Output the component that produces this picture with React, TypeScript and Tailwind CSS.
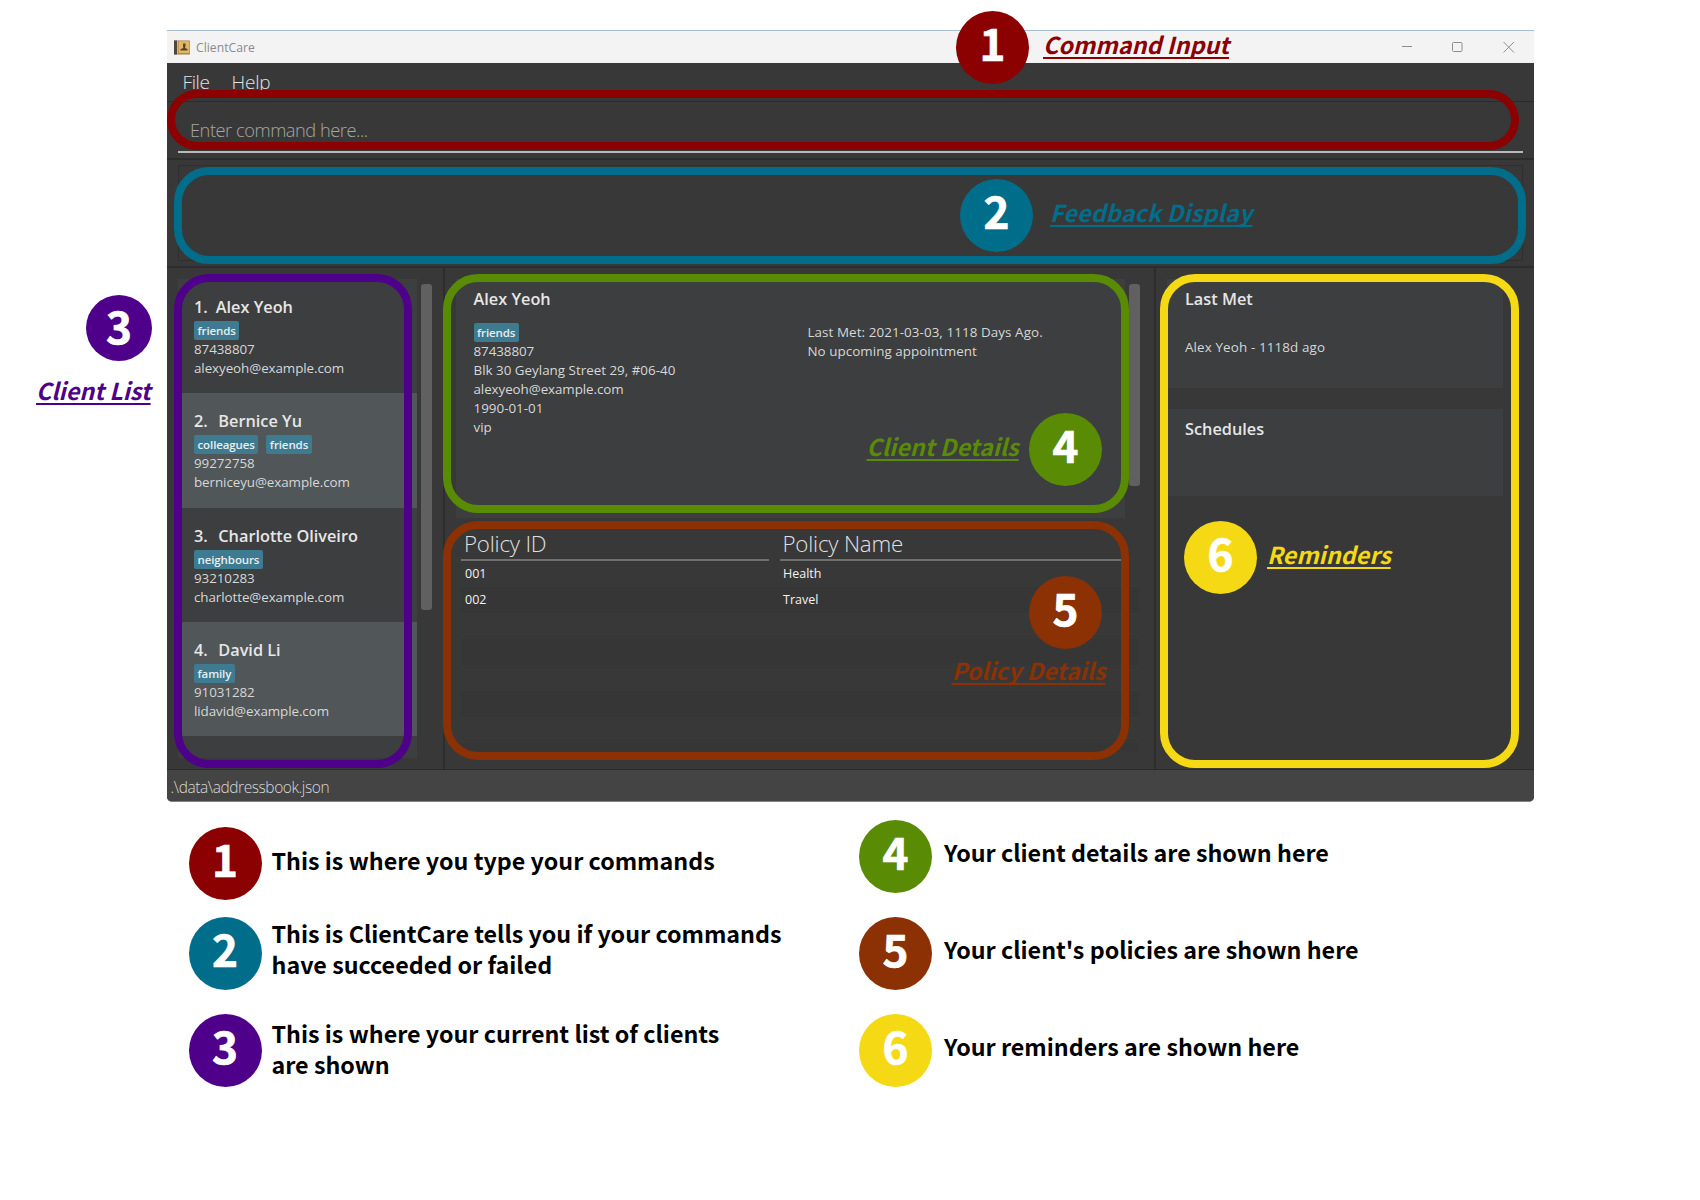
import React from "react";

function Tag({ children }: { children: string }) {
  return (
    <span className="flex h-[19px] items-center rounded-[2px] bg-[#3e7b91] px-[3.5px] text-[11.5px] leading-[19px] font-semibold tracking-[-0.1px] whitespace-pre text-[#e8eef0]">
      {children}
    </span>
  );
}

const clients = [
  { n: 1, name: "Alex Yeoh", tags: ["friends"], phone: "87438807", email: "alexyeoh@example.com" },
  { n: 2, name: "Bernice Yu", tags: ["colleagues", "friends"], phone: "99272758", email: "berniceyu@example.com" },
  { n: 3, name: "Charlotte Oliveiro", tags: ["neighbours"], phone: "93210283", email: "charlotte@example.com" },
  { n: 4, name: "David Li", tags: ["family"], phone: "91031282", email: "lidavid@example.com" },
];

const policies = [["001", "Health"], ["002", "Travel"], [], [], [], [], [], []];

const body = "whitespace-pre text-[13.4px] leading-[19px] text-[#d6d7d7] ";
const tight = "tracking-[-0.08px] ";
const title = "whitespace-pre text-[16.3px] leading-6 font-semibold text-[#e6e6e6] ";
const column = "whitespace-pre text-[22.3px] leading-[29px] font-light tracking-[-0.2px] text-[#e0e0e0]";

function Badge({ n, c }: { n: number; c: string }) {
  return (
    <div className={"flex items-center justify-center rounded-full font-['Noto_Sans_CJK_SC',sans-serif] font-bold text-white " + c}>
      <span className="pb-[11px] text-[44px] leading-[60px] [-webkit-text-stroke:0.7px_white]">{n}</span>
    </div>
  );
}

function Label({ c, children }: { c: string; children: string }) {
  return (
    <div className={"absolute h-[36px] font-['Noto_Sans_CJK_SC',sans-serif] text-[23.3px] leading-[36px] font-bold whitespace-pre italic underline decoration-[1.5px] underline-offset-[3px] [text-decoration-skip-ink:none] " + c}>
      {children}
    </div>
  );
}

function Note({ n, bg, c, t, lines }: { n: number; bg: string; c: string; t: string; lines: string[] }) {
  return (
    <div className={"flex " + c}>
      <Badge n={n} c={"size-[73px] shrink-0 " + bg} />
      <div className={"flex flex-col justify-center font-['Noto_Sans_CJK_SC',sans-serif] text-[23.27px] leading-[31px] font-bold whitespace-pre text-black " + t}>
        {lines.map((l) => <span key={l}>{l}</span>)}
      </div>
    </div>
  );
}

export default function App() {
  return (
    <div className="relative h-[1200px] w-[1700px] overflow-hidden bg-white font-['Open_Sans',sans-serif]">
      <div className="mt-[30px] ml-[166.5px] flex h-[772px] w-[1367px] flex-col overflow-hidden rounded-b-[5px] border-t border-b border-t-[#a9bfcf] border-b-[#8c8273] bg-[#383838]">
        <div className="flex h-8 shrink-0 items-center bg-[#f3f3f3] pl-[7.5px]">
          <svg width="17" height="15" viewBox="0 0 17 15">
            <rect x="0" y="0.500" width="16" height="14" rx="0.800" fill="#a47a3c" />
            <rect x="0" y="0.500" width="3" height="14" fill="#54463a" />
            <rect x="3" y="0.500" width="1" height="14" fill="#cdb387" />
            <rect x="4.500" y="1.200" width="11" height="12" fill="#e3b765" />
            <path d="M9 3.500h2.500v2.500l-.5 2 2.500 1v1.500H6.500V9L9 8.200l.3-.7L9 6z" fill="#54422c" />
          </svg>
          <span className="ml-[5px] pt-[2px] text-[12.2px] leading-5 text-[#8b8b8b]">ClientCare</span>
          <svg className="mr-[19px] ml-auto" width="116" height="14" viewBox="0 0 116 14" fill="none" stroke="#8e8e8e">
            <path d="M3 6.500h10" />
            <rect x="53.500" y="2.500" width="9.500" height="9" rx="1" />
            <path d="M104.500 2l10.500 10.500M115 2l-10.500 10.500" />
          </svg>
        </div>
        <div className="flex h-[38px] shrink-0 gap-[22px] pl-4 text-[19px] leading-[39px] font-light text-[#e2e2e2]">
          <span className="tracking-[-0.4px]">File</span>
          <span className="tracking-[-0.2px]">Help</span>
        </div>
        <div className="h-[57px] shrink-0 border-t border-[#2b2b2b] px-[11px] pt-[17px]">
          <div className="h-[34px] border-b-2 border-[#b9b9b9] pl-[12.5px] text-[18.3px] leading-[22px] font-light tracking-[-0.48px] whitespace-pre text-[#a6a6a6]">
            Enter command here...
          </div>
        </div>
        <div className="h-[108px] shrink-0 border-t-2 border-[#2d2d2d] px-[11px] pt-[5px]">
          <div className="h-[96px] border border-[#2f2f2f]" />
        </div>
        <div className="flex h-[503px] shrink-0 border-t-2 border-[#2d2d2d]">
          <div className="flex w-[276.5px] gap-1 pt-[11px] pl-[11px]">
            <div className="h-[479px] w-[239px] overflow-hidden">
              {clients.map((p, i) => (
                <div key={p.n} className={"flex h-[114.3px] flex-col pt-4 pl-[16.5px] " + (i % 2 ? "bg-[#515658]" : "bg-[#3c3e3f]")}>
                  <div className={"flex " + (i ? "gap-[10.5px]" : "gap-2")}>
                    <span className={title}>{p.n + "."}</span>
                    <span className={title}>{p.name}</span>
                  </div>
                  <div className="mt-[2px] flex gap-2">{p.tags.map((t) => <Tag key={t}>{t}</Tag>)}</div>
                  <span className={body + tight}>{p.phone}</span>
                  <span className={body + tight}>{p.email}</span>
                </div>
              ))}
              <div className="h-[22px] bg-[#3c3e3f]" />
            </div>
            <div className="mt-[5px] h-[326px] w-[11px] rounded-[3px] bg-[#606060]" />
          </div>
          <div className="flex w-[713px] flex-col border-x-2 border-[#2d2d2d] pt-[11px] pl-[11px]">
            <div className="flex h-[239px] gap-1">
              <div className="flex w-[669px] flex-col bg-[#3c3e3f] pl-[17.5px]">
                <span className={title + "mt-[8px]"}>Alex Yeoh</span>
                <div className="mt-3 flex">
                  <div className="flex w-[334px] flex-col items-start">
                    <Tag>friends</Tag>
                    <span className={body + tight}>87438807</span>
                    <span className={body}>Blk 30 Geylang Street 29, #06-40</span>
                    <span className={body + tight}>alexyeoh@example.com</span>
                    <span className={body}>1990-01-01</span>
                    <span className={body}>vip</span>
                  </div>
                  <div className="flex flex-col items-start">
                    <span className={body + "tracking-[0.08px]"}>Last Met: 2021-03-03, 1118 Days Ago.</span>
                    <span className={body + "tracking-[0.04px]"}>No upcoming appointment</span>
                  </div>
                </div>
              </div>
              <div className="mt-[5px] h-[202px] w-[11px] rounded-[3px] bg-[#606060]" />
            </div>
            <div className="mt-[11px] ml-[5px] w-[678px]">
              <div className="flex h-[32px] gap-[11px]">
                <div className={"w-[308px] border-b-2 border-[#707070] pl-[3px] " + column}>Policy ID</div>
                <div className={"w-[341px] border-b-2 border-[#707070] pl-[2.5px] " + column}>Policy Name</div>
              </div>
              {policies.map((r, i) => (
                <div key={i} className={"flex pl-[4px] text-[12.5px] leading-[25px] text-[#f2f2f2] " + (i === 7 ? "h-[9px] " : "h-[26px] ") + (i % 2 ? "bg-[#363636]" : "")}>
                  <span className="w-[318px]">{r[0]}</span>
                  <span>{r[1]}</span>
                </div>
              ))}
            </div>
          </div>
          <div className="flex flex-col pt-[11px] pl-[11px]">
            <div className="flex h-[109px] w-[336px] flex-col bg-[#3c3e3f] pl-[18px]">
              <span className={title + "mt-[8px]"}>Last Met</span>
              <span className={body + "mt-[27px] tracking-[0.13px]"}>Alex Yeoh - 1118d ago</span>
            </div>
            <div className="mt-[21px] flex h-[87px] w-[336px] flex-col bg-[#3c3e3f] pl-[18px]">
              <span className={title + "mt-[8px]"}>Schedules</span>
            </div>
          </div>
        </div>
        <div className="flex h-[32px] shrink-0 border-t border-[#2b2b2b] bg-[#444444] pl-1 text-[15.5px] leading-[34px] font-light tracking-[-0.42px] whitespace-pre text-[#d8d8d8]">
          {".\\data\\addressbook.json"}
        </div>
      </div>

      <div className="mt-[17.500px] ml-[188.500px] flex">
        <div className="w-[670.500px]">
          <Note n={1} bg="bg-[#8b0000]" c="mt-[7px]" t="pb-[5px] pl-[10px]" lines={["This is where you type your commands"]} />
          <Note n={2} bg="bg-[#006d8b]" c="mt-[17px]" t="pb-[9px] pl-[10px]" lines={["This is ClientCare tells you if your commands", "have succeeded or failed"]} />
          <Note n={3} bg="bg-[#4e008a]" c="mt-[24px]" t="pb-[3px] pl-[10px]" lines={["This is where your current list of clients", "are shown"]} />
        </div>
        <div>
          <Note n={4} bg="bg-[#5a8b04]" c="" t="pb-[7px] pl-[12px]" lines={["Your client details are shown here"]} />
          <Note n={5} bg="bg-[#8b3103]" c="mt-[24px]" t="pb-[7px] pl-[12px]" lines={["Your client's policies are shown here"]} />
          <Note n={6} bg="bg-[#f4d914]" c="mt-[24px]" t="pb-[7px] pl-[12px]" lines={["Your reminders are shown here"]} />
        </div>
      </div>

      <div className="absolute top-[90px] left-[166.5px] h-[60px] w-[1352.5px] rounded-[30px] border-8 border-[#8b0000]" />
      <div className="absolute top-[167px] left-[174px] h-[97px] w-[1352px] rounded-[35px] border-8 border-[#006d8b]" />
      <div className="absolute top-[274px] left-[174px] h-[494px] w-[238px] rounded-[35px] border-8 border-[#4e008a]" />
      <div className="absolute top-[274px] left-[443px] h-[239px] w-[686px] rounded-[35px] border-8 border-[#5a8b04]" />
      <div className="absolute top-[521px] left-[443px] h-[239px] w-[686px] rounded-[35px] border-8 border-[#8b3103]" />
      <div className="absolute top-[274px] left-[1160px] h-[494px] w-[359px] rounded-[35px] border-8 border-[#f4d914]" />

      <Badge n={1} c="absolute top-[11px] left-[956px] size-[73px] bg-[#8b0000]" />
      <Badge n={2} c="absolute top-[179px] left-[960px] size-[73px] bg-[#006d8b]" />
      <Badge n={3} c="absolute top-[295px] left-[86px] size-[66px] bg-[#4e008a] pt-[4px]" />
      <Badge n={4} c="absolute top-[412.5px] left-[1029px] size-[73px] bg-[#5a8b04]" />
      <Badge n={5} c="absolute top-[576px] left-[1029px] size-[73px] bg-[#8b3103]" />
      <Badge n={6} c="absolute top-[521px] left-[1184px] size-[73px] bg-[#f4d914]" />
      <Label c="top-[26px] left-[1043px] text-[#8b0000]">Command Input</Label>
      <Label c="top-[194px] left-[1050px] tracking-[0.15px] text-[#006d8b]">Feedback Display</Label>
      <Label c="top-[372px] left-[36px] text-[#4e008a]">Client List</Label>
      <Label c="top-[428px] left-[866.5px] text-[#5a8b04]">Client Details</Label>
      <Label c="top-[652px] left-[951.5px] text-[#8b3103]">Policy Details</Label>
      <Label c="top-[536px] left-[1267px] text-[#f4d914]">Reminders</Label>
    </div>
  );
}
